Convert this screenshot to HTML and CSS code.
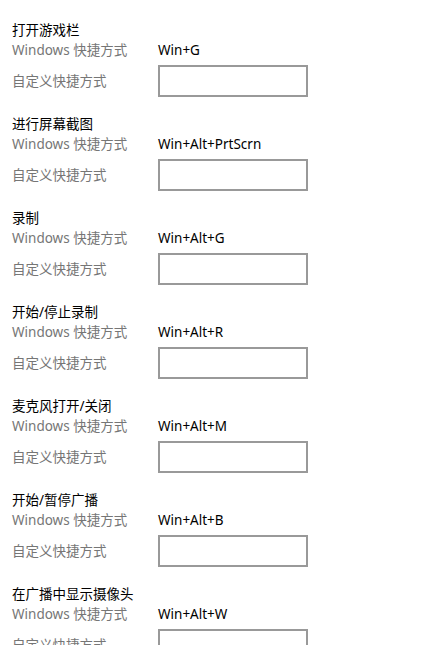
FILE: index.html
```html
<!DOCTYPE html>
<html lang="zh-CN">
<head>
    <meta charset="UTF-8">
    <meta name="viewport" content="width=device-width, initial-scale=1.0">
    <title>键盘快捷方式</title>
    <link rel="stylesheet" href="styles.css">
</head>
<body>
    <div class="shortcuts">
        <div class="shortcut">
            <div class="shortcut-title">打开游戏栏</div>
            <div class="shortcut-row">
                <span class="label">Windows 快捷方式</span>
                <span class="keys">Win+G</span>
            </div>
            <div class="shortcut-row">
                <span class="label">自定义快捷方式</span>
                <input type="text" class="key-input">
            </div>
        </div>
        <div class="shortcut">
            <div class="shortcut-title">进行屏幕截图</div>
            <div class="shortcut-row">
                <span class="label">Windows 快捷方式</span>
                <span class="keys">Win+Alt+PrtScrn</span>
            </div>
            <div class="shortcut-row">
                <span class="label">自定义快捷方式</span>
                <input type="text" class="key-input">
            </div>
        </div>
        <div class="shortcut">
            <div class="shortcut-title">录制</div>
            <div class="shortcut-row">
                <span class="label">Windows 快捷方式</span>
                <span class="keys">Win+Alt+G</span>
            </div>
            <div class="shortcut-row">
                <span class="label">自定义快捷方式</span>
                <input type="text" class="key-input">
            </div>
        </div>
        <div class="shortcut">
            <div class="shortcut-title">开始/停止录制</div>
            <div class="shortcut-row">
                <span class="label">Windows 快捷方式</span>
                <span class="keys">Win+Alt+R</span>
            </div>
            <div class="shortcut-row">
                <span class="label">自定义快捷方式</span>
                <input type="text" class="key-input">
            </div>
        </div>
        <div class="shortcut">
            <div class="shortcut-title">麦克风打开/关闭</div>
            <div class="shortcut-row">
                <span class="label">Windows 快捷方式</span>
                <span class="keys">Win+Alt+M</span>
            </div>
            <div class="shortcut-row">
                <span class="label">自定义快捷方式</span>
                <input type="text" class="key-input">
            </div>
        </div>
        <div class="shortcut">
            <div class="shortcut-title">开始/暂停广播</div>
            <div class="shortcut-row">
                <span class="label">Windows 快捷方式</span>
                <span class="keys">Win+Alt+B</span>
            </div>
            <div class="shortcut-row">
                <span class="label">自定义快捷方式</span>
                <input type="text" class="key-input">
            </div>
        </div>
        <div class="shortcut">
            <div class="shortcut-title">在广播中显示摄像头</div>
            <div class="shortcut-row">
                <span class="label">Windows 快捷方式</span>
                <span class="keys">Win+Alt+W</span>
            </div>
            <div class="shortcut-row">
                <span class="label">自定义快捷方式</span>
                <input type="text" class="key-input">
            </div>
        </div>
    </div>
</body>
</html>
```

FILE: styles.css
```css
body {
    font-family: "Noto Sans", "Noto Sans CJK SC", sans-serif;
    font-size: 13.5px;
    margin: 0;
    padding: 0;
    background-color: #fff;
    color: #000;
    overflow: hidden;
}

.shortcuts {
    padding: 20px 12px 0;
}

.shortcut {
    margin-bottom: 17px;
}

.shortcut-title {
    line-height: 20px;
    height: 20px;
}

.shortcut-row {
    display: flex;
    align-items: center;
    line-height: 20px;
}

.shortcut-row + .shortcut-row {
    margin-top: 5px;
}

.label {
    width: 146px;
    color: #767676;
}

.keys {
    color: #000;
}

.key-input {
    box-sizing: border-box;
    width: 150px;
    height: 32px;
    margin: 0;
    padding: 0 8px;
    border: 2px solid #999;
    border-radius: 0;
    background: #fff;
    font: inherit;
    outline: none;
}
```
